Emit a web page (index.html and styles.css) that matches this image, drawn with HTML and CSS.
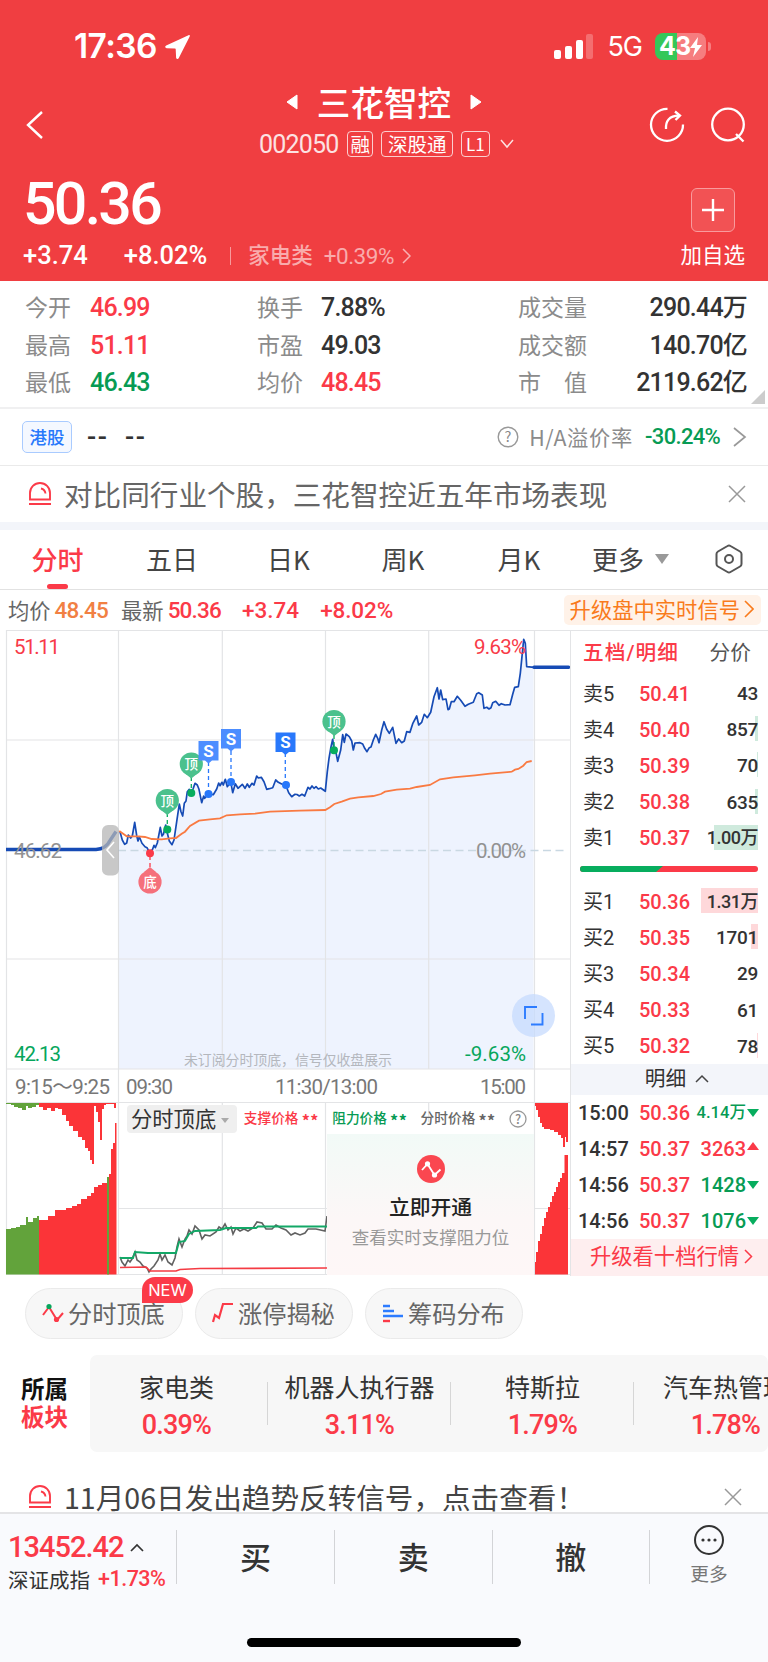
FILE: index.html
```html
<!DOCTYPE html>
<html lang="zh-CN">
<head>
  <meta charset="UTF-8" />
  <meta name="viewport" content="width=device-width, initial-scale=1.0"/>
  <title>三花智控 002050</title>
  <link rel="stylesheet" href="styles.css">
</head>
<body>

  <header class="top">
    <div class="status">
      <span class="clock">17:36</span>
      <svg class="location" width="27" height="26" viewBox="0 0 27 26"><path d="M24.5 1.2 2.2 11.6c-1.6.8-1.2 2.6.5 2.7l8.3.3c.5 0 .7.2.7.7l.4 8.1c.1 1.7 2 2.1 2.7.5L25.7 2.4c.4-1-.3-1.6-1.2-1.2z" fill="#fff"/></svg>
      <svg class="signal" width="40" height="26" viewBox="0 0 40 26">
        <rect x="0" y="16" width="7" height="9" rx="2" fill="#fff"/>
        <rect x="11" y="12" width="7" height="13" rx="2" fill="#fff"/>
        <rect x="22" y="6" width="7" height="19" rx="2" fill="#fff"/>
        <rect x="32" y="0" width="7" height="25" rx="2" fill="#fff" opacity=".25"/>
      </svg>
      <span class="network">5G</span>
      <span class="battery">43<svg width="12" height="20" viewBox="0 0 12 20"><path d="M8 0 0 11h5l-2 9 9-12H7z" fill="#fff"/></svg></span>
      <i class="battery-cap"></i>
    </div>

    <div class="title-bar">
      <svg class="back" width="18" height="30" viewBox="0 0 18 30"><path d="M16 2 2 15l14 13" fill="none" stroke="#fff" stroke-width="2.4"/></svg>
      <div class="title">
        <div class="name-row">
          <svg width="12" height="16" viewBox="0 0 12 16"><path d="M11 1v14L1 8z" fill="#fff" stroke="#fff" stroke-linejoin="round"/></svg>
          <h1>三花智控</h1>
          <svg width="12" height="16" viewBox="0 0 12 16"><path d="M1 1v14L11 8z" fill="#fff" stroke="#fff" stroke-linejoin="round"/></svg>
        </div>
        <div class="code-row">
          <span class="num code">002050</span>
          <span class="tag">融</span>
          <span class="tag wide">深股通</span>
          <span class="tag l1">L1</span>
          <svg width="14" height="10" viewBox="0 0 14 10"><path d="m1 1 6 7 6-7" fill="none" stroke="#fff" stroke-width="1.5" opacity=".85"/></svg>
        </div>
      </div>
      <div class="title-icons">
        <svg width="36" height="36" viewBox="0 0 36 36" fill="none" stroke="#fff" stroke-width="2.3">
          <path d="M18.5 1.8A16 16 0 1 0 34 17.5"/>
          <path d="M17 22c-.5-8 3-13 13-13.5"/>
          <path d="m26 4.500 5 4-4.500 4.500"/>
        </svg>
        <svg width="36" height="36" viewBox="0 0 36 36" fill="none" stroke="#fff" stroke-width="2.3">
          <circle cx="18" cy="17.5" r="15.8"/>
          <path d="m26 27 7.500 7.500"/>
        </svg>
      </div>
    </div>

    <div class="quote">
      <div>
        <div class="num price">50.36</div>
        <div class="change num">
          <b>+3.74</b><b class="pct">+8.02%</b><i></i>
          <span class="industry">家电类</span><span class="industry-pct">+0.39%</span>
          <svg width="9" height="16" viewBox="0 0 9 16"><path d="m1 1 7 7-7 7" fill="none" stroke="#fff" stroke-width="1.5" opacity=".6"/></svg>
        </div>
      </div>
      <div class="watch">
        <span class="plus"><svg width="22" height="22" viewBox="0 0 22 22"><path d="M11 0v22M0 11h22" stroke="#fff" stroke-width="2.4"/></svg></span>
        <span>加自选</span>
      </div>
    </div>
  </header>

  <section class="stats">
    <span>今开</span><b class="num up">46.99</b><span>换手</span><b class="num">7.88%</b><span>成交量</span><b class="num">290.44万</b>
    <span>最高</span><b class="num up">51.11</b><span>市盈</span><b class="num">49.03</b><span>成交额</span><b class="num">140.70亿</b>
    <span>最低</span><b class="num down">46.43</b><span>均价</span><b class="num up">48.45</b><span>市　值</span><b class="num">2119.62亿</b>
    <i class="corner"></i>
  </section>

  <section class="ha">
    <span class="hk">港股</span>
    <span class="dash">--</span><span class="dash">--</span>
    <svg class="help" width="22" height="22" viewBox="0 0 22 22"><circle cx="11" cy="11" r="9.8" fill="none" stroke="#999" stroke-width="1.4"/><text x="11" y="16" font-size="14.5" text-anchor="middle" fill="#888">?</text></svg>
    <span class="ha-label">H/A溢价率</span>
    <b class="num down">-30.24%</b>
    <svg width="14" height="20" viewBox="0 0 14 20"><path d="m1 1 11 9-11 9" fill="none" stroke="#999" stroke-width="1.7"/></svg>
  </section>

  <section class="notice">
    <svg class="bell" width="22" height="24" viewBox="0 0 22 24" fill="none" stroke="#fb3a48" stroke-width="1.9"><path d="M1 17.500V11a10 10 0 0 1 20 0v6.500zM0 22h22M12 6.500q4 1 4.500 5"/></svg>
    <span>对比同行业个股，三花智控近五年市场表现</span>
    <svg class="close" width="18" height="18" viewBox="0 0 18 18"><path d="m1 1 16 16M17 1 1 17" stroke="#999" stroke-width="1.5"/></svg>
  </section>

  <nav class="tabs">
    <span class="active">分时</span>
    <span>五日</span>
    <span>日K</span>
    <span>周K</span>
    <span>月K</span>
    <span class="more">更多<svg width="14" height="10" viewBox="0 0 14 10"><path d="M0 0h14L7 10z" fill="#999"/></svg></span>
    <svg class="gear" width="28" height="30" viewBox="0 0 28 30" fill="none" stroke="#555" stroke-width="2"><path d="M12.500 2q1.500-1 3 0l9.500 5.500q1.500.9 1.500 2.500v10q0 1.600-1.500 2.500L15.500 28q-1.500 1-3 0L3 22.500Q1.500 21.600 1.500 20V10Q1.500 8.400 3 7.500z"/><circle cx="14" cy="15" r="4"/></svg>
  </nav>

  <div class="info">
    <span>均价</span><b class="num avg">48.45</b>
    <span>最新</span><b class="num up">50.36</b>
    <b class="num up diff">+3.74</b><b class="num up diff-pct">+8.02%</b>
    <span class="upgrade">升级盘中实时信号<svg width="10" height="18" viewBox="0 0 10 18"><path d="m1 1 8 8-8 8" fill="none" stroke="#f97b1c" stroke-width="1.6"/></svg></span>
  </div>

  <main class="market">
    <div class="charts">
      <!-- price chart -->
      <svg class="price-chart" width="570" height="472" viewBox="0 630 570 472">
        <path fill="#eef3fe" d="M119 1069V831L122 840 125 844 128 835 131 838 135 822 138 841 139 837 142 843 145 847 150 853 155 848 160 827 162 836 166 825 169 841 172 845 174 840 177 822 179 804 183 816 186 801 189 789 195 783 199 789 202 803 208 794 213 795 219 783 225 779 231 782 233 793 235 784 245 788 252 783 257 776 261 777 267 789 273 788 276 780 286 785 292 797 305 796 308 787 320 788 325 791 329 758 333 739 338 761 343 735 349 737 353 750 355 743 363 744 367 752 376 734 379 743 384 722 389 733 393 727 396 743 404 741 407 732 417 716 419 725 431 712 434 697 437 688 443 700 448 710 457 696 465 706 473 702 477 694 482 695 484 708 496 701 510 705 515 687 518 687 524 639 527 667H533.500V1069z"/>
        <path class="grid" d="M6.500 630.500h563.500M6.500 740h563.500M6.500 959h563.500M6.500 1069h563.500M6.500 630v472M118.500 630v472M222.300 630v439M325.500 630v439M428.700 630v439M534.500 630v472"/>
        <path d="M118 850.500h449" stroke="#c9d8e2" stroke-width="1.5" stroke-dasharray="8 4.500"/>

        <path d="M6 849.500h90q10-.5 14-9l6-9" fill="none" stroke="#164bb5" stroke-width="3.4"/>
        <rect x="102" y="825" width="17" height="50.5" rx="6" fill="#b5b5b5" opacity=".75"/>
        <path d="m114 842-7 8 7 8" fill="none" stroke="#fff" stroke-width="1.6"/>

        <polyline class="price-line" points="120,831.7 122.3,840 124.7,844.3 126.7,843 128.3,835 130.7,838 132.3,836 134.7,822.3 136.7,835.7 138,841 139.3,836.7 142,843.3 145,846.7 147,847.7 150,853.3 152.7,849 154,845.3 155.3,847.7 157.3,843 160.3,827.3 162,836 163.5,834 165.7,825 167.3,833 169.3,841 172,844.7 174,840 176.7,821.7 179.3,804 181,811.7 182.7,816 184.3,803.3 186,801 187.3,791.7 189.3,789.3 191.3,793.3 193.3,788.3 195,783.3 197.3,785 199,789.3 201.7,802.7 203.7,796 204.7,798.3 208.3,794 213.3,794.7 216.7,789 218.7,783 220,785.7 222,782.3 223.3,785 225.3,779.3 227.3,786.7 230.7,781.7 232.7,792.7 235.3,783.7 238,788.3 242.3,784.3 245,788.3 247.3,784 249.3,787.3 252,783.3 254,785 256.7,776 258.3,778 261.3,777.3 264,781.7 266.7,789.3 269.3,788.7 272.7,787.7 275.7,780 278.3,782.3 281.7,784 285.7,785 288.7,792.7 291.7,796.7 295,794.3 297,794.5 299.3,796 302,794.3 304.7,796 308,787.3 310,789 312,786 314,788.3 316,786.7 318.3,789 320.7,788 325.3,791.3 327.3,771.7 329,758.3 330.7,748.3 332.7,739.3 334.3,750 336,752.7 337.7,761.3 340.7,750 342.7,734.7 344.3,742.3 346,734 349.3,736.7 351.7,741 353.3,750 355,743 360,742.7 362.7,744 364.7,748.3 367,751.7 369.3,747.7 371,747 373.3,740 375.7,734.3 377.7,738.3 379,742.7 381.7,730 384,721.7 386.7,729.3 389.3,733.3 392.7,727.3 396,743.3 398.7,739 401.7,742.7 404.3,741 406.7,731.7 410,732.3 412.7,723.7 416.7,716 418.7,725 421.7,722.3 424.3,714.3 427.3,717.7 430.7,712.3 434,696.7 437.3,687.7 439,699 440.7,690 442.7,699.7 446,699 448,709.7 449.3,709 451.3,701.7 454,701.7 457.3,696.3 460.7,700.3 465,706.3 468.3,704.3 473.3,702.3 476.7,693.7 478.7,692.7 482.3,695 484,708.3 486.7,707.3 489,709 491,707.7 492.7,702.7 495.7,701.3 499,705.3 501.3,703.7 505,705 510,704.7 512.7,694.3 514.7,687.3 518.3,686.7 520.3,673.3 522.3,653.3 523.7,639.3 525.3,643.3 526.7,666.7 534.3,667.3"/>
        <path d="M534 667.300h34.500" stroke="#164bb5" stroke-width="3.4" stroke-linecap="round"/>
        <polyline class="avg-line" points="119.3,831 126.7,836.3 138.3,836.3 145,837 151.7,839 161.7,839.3 170,838.3 176,838 181.7,833.7 185,831.7 190,826 199,820.7 210,819.3 220,818.3 226.7,815.3 240,814.3 255,813.7 270,811.7 300,810.7 325.3,810 330,807.3 334.3,804 341.7,801.7 350,798.7 358.3,797.3 373.3,796 381,794 385,791.7 396.7,789.7 410,788.7 416.7,787 430,785 440,779.3 453.3,777.3 475,775.3 490,773.7 511.7,771.7 515,769.7 518.3,769 523.3,765.7 526.7,762 531.7,761"/>

        <!-- top / bottom signals -->
        <g class="mark green">
          <path d="M167.300 813v14M191.300 777v14M334 735v14"/>
          <circle cx="167.3" cy="829.5" r="4"/><circle cx="191.3" cy="793" r="4"/><circle cx="334" cy="750.3" r="4"/>
        </g>
        <g fill="#4bc18d">
          <path d="M161 810h12.500l-6.200 5zM185 773.500h12.500l-6.200 5zM328 731h12.500l-6.200 5z"/>
          <circle cx="167.3" cy="800.5" r="11.6"/><circle cx="191.3" cy="764" r="11.6"/><circle cx="334" cy="721.5" r="11.6"/>
        </g>
        <g class="mark red"><path d="M150 856v14"/><circle cx="150" cy="853.3" r="4"/></g>
        <path d="M144 872h12l-6-5z" fill="#f5707b"/><circle cx="150" cy="882" r="11.6" fill="#f5707b"/>
        <g class="mark-text">
          <text x="167.3" y="805.5">顶</text><text x="191.3" y="769">顶</text><text x="334" y="726.5">顶</text><text x="150" y="887">底</text>
        </g>
        <g class="mark blue">
          <path d="M208.500 762v30M231 751v28M285.300 753v29"/>
          <circle cx="208.5" cy="794" r="4"/><circle cx="231" cy="782" r="4"/><circle cx="286" cy="785" r="4"/>
        </g>
        <path d="M198.500 741h20v19.500h-6.500l-3.500 3-3.500-3h-6.500zM221 729h20v19.500h-6.500l-3.500 3-3.500-3h-6.500z" fill="#4c8dff"/>
        <path d="M275.500 732.500h20v19.500h-6.500l-3.500 3-3.500-3h-6.500z" fill="#2878fb"/>
        <g class="s-text"><text x="208.5" y="756.5">S</text><text x="231" y="744.5">S</text><text x="285.5" y="748">S</text></g>

        <g class="axis">
          <text x="14" y="653.5" textLength="46" fill="#f83a48">51.11</text>
          <text x="474" y="653.5" textLength="52" fill="#f83a48">9.63%</text>
          <text x="14" y="857.5" textLength="48" fill="#929292">46.62</text>
          <text x="476" y="857.5" textLength="50" fill="#929292">0.00%</text>
          <text x="14" y="1061" textLength="47" fill="#07a65c">42.13</text>
          <text x="465" y="1061" textLength="61" fill="#07a65c">-9.63%</text>
          <g fill="#777">
            <text x="15" y="1093.5" textLength="95">9:15～9:25</text>
            <text x="126" y="1093.5" textLength="47">09:30</text>
            <text x="275" y="1093.5" textLength="103">11:30/13:00</text>
            <text x="480" y="1093.5" textLength="46">15:00</text>
          </g>
        </g>
        <text x="184" y="1065" font-size="13.9" fill="#b4b7bd" textLength="208">未订阅分时顶底，信号仅收盘展示</text>

        <circle cx="533.5" cy="1015.5" r="21.5" fill="#c5dafd" opacity=".72"/>
        <path d="M525 1019v-12h12M531 1024.500h11.500v-11.500" fill="none" stroke="#2d7cff" stroke-width="1.9"/>
      </svg>

      <div class="mini">
        <svg width="570" height="173" viewBox="0 1102 570 173">
          <path class="grid" d="M6 1102.500h564M118 1208.500h209M534 1208.500h36M6 1274.500h564M6.500 1102v173M118.500 1102v173M222.300 1102v173M325.500 1102v173M428.700 1102v20M534.500 1102v173"/>
          <!-- call auction volume -->
          <path fill="#62a33b" d="M6 1103H39V1105H36V1107H32V1108H28V1106H26V1110H22V1108H18V1107H14V1105H11V1104H6zM6 1274.500V1229H11V1228H16V1227H20V1225H26V1217H28V1222H33V1218H37V1216H39V1274.500z"/>
          <path fill="#fb3438" d="M39 1103H116V1108H114V1104H106V1105H104V1109H102V1140H100V1122H98V1112H96V1106H94V1164H92V1160H90V1151H88V1148H85V1140H82V1137H78V1131H73V1126H69V1121H66V1115H62V1109H58V1108H55V1111H51V1108H47V1110H43V1107H39zM39 1274.500V1220H48V1216H55V1210H66V1208H72V1206H77V1204H81V1199H87V1196H91V1193H94V1187H98V1185H102V1183H108V1177H109V1174H111V1149H113V1143H115V1123H116.500V1274.500z"/>
          <path d="M108 1177v97.500" stroke="#62a33b" stroke-width="2"/>
          <path fill="#fb3438" d="M535 1103H568V1142H566V1137H565V1147H563V1138H561V1135H558V1132H554V1130H550V1129H544V1127H542V1123H540V1117H538V1110H536V1106H535zM535 1274.500V1262H536V1252H538V1241H540V1234H542V1226H544V1218H546V1212H548V1207H550V1202H552V1196H554V1192H556V1187H558V1182H560V1178H562V1173H564.500V1155H568V1274.500z"/>
          <!-- support / resistance -->
          <polyline fill="none" stroke="#616161" stroke-width="1.6" points="120,1257 122,1262 125,1266 128,1260 130,1262 132,1259 135,1252 137,1260 140,1262 143,1266 147,1268 149,1272 151,1269 154,1266 158,1260 160,1254 162,1260 165,1255 168,1262 172,1265 175,1258 177,1247 179,1239 182,1247 185,1239 187,1236 189,1230 192,1234 195,1226 199,1230 202,1239 205,1235 210,1236 216,1232 219,1227 222,1229 225,1224 228,1230 231,1227 233,1234 236,1228 240,1231 244,1229 248,1231 253,1228 257,1222 262,1223 266,1229 272,1229 276,1225 281,1228 286,1230 291,1235 295,1233 300,1235 305,1233 308,1229 316,1229 325,1231 327,1216"/>
          <polyline fill="none" stroke="#13a867" stroke-width="1.9" points="120,1258 133,1258 135,1252 148,1253 176,1253 179,1242 185,1241 189,1234 195,1231 220,1230 226,1228 256,1228 258,1226.5 327,1226.5"/>
          <polyline fill="none" stroke="#f43b43" stroke-width="1.7" points="120,1267.5 146,1267 150,1271 176,1271 180,1269.5 200,1268.5 327,1268"/>
        </svg>
        <div class="legend">
          <span class="pick">分时顶底<i></i></span>
          <span class="up">支撑价格 <b>**</b></span>
          <span class="down">阻力价格 <b>**</b></span>
          <span>分时价格 <b>**</b></span>
          <svg width="18" height="18" viewBox="0 0 18 18"><circle cx="9" cy="9" r="8" fill="none" stroke="#999" stroke-width="1.3"/><text x="9" y="13.5" font-size="12.5" text-anchor="middle" fill="#888">?</text></svg>
        </div>
        <div class="promo">
          <svg width="28" height="28" viewBox="0 0 28 28"><circle cx="14" cy="14" r="14" fill="#fa4750"/><path d="m5 15 5.500-6 7 11 6-5.500" fill="none" stroke="#fff" stroke-width="1.8"/><circle cx="10.5" cy="8.8" r="2.6" fill="#fff"/><circle cx="17.5" cy="20" r="2.6" fill="#fff"/></svg>
          <b>立即开通</b>
          <span>查看实时支撑阻力位</span>
        </div>
      </div>
    </div>

    <aside class="book">
      <div class="book-head"><b>五档/明细</b><span>分价</span></div>
      <div class="level"><span>卖5</span><b>50.41</b><em>43</em></div>
      <div class="level sell"><span>卖4</span><b>50.40</b><em>857</em><i style="width: 3px"></i></div>
      <div class="level sell"><span>卖3</span><b>50.39</b><em>70</em><i style="width: 1px"></i></div>
      <div class="level sell"><span>卖2</span><b>50.38</b><em>635</em><i style="width: 3px"></i></div>
      <div class="level sell"><span>卖1</span><b>50.37</b><em class="wan">1.00万</em><i style="width: 44px"></i></div>
      <div class="ratio"><svg width="178" height="6" viewBox="0 0 178 6"><rect width="178" height="6" rx="3" fill="#fb3a48"/><path d="M3 0h80l-7 6H3a3 3 0 0 1 0-6z" fill="#07ad5e"/></svg></div>
      <div class="level buy"><span>买1</span><b>50.36</b><em class="wan">1.31万</em><i style="width: 57px"></i></div>
      <div class="level buy"><span>买2</span><b>50.35</b><em>1701</em><i style="width: 7px"></i></div>
      <div class="level"><span>买3</span><b>50.34</b><em>29</em></div>
      <div class="level"><span>买4</span><b>50.33</b><em>61</em></div>
      <div class="level buy"><span>买5</span><b>50.32</b><em>78</em><i style="width: 1px"></i></div>
      <div class="detail-head">明细<svg width="14" height="9" viewBox="0 0 14 9"><path d="m1 8 6-6 6 6" fill="none" stroke="#444" stroke-width="1.5"/></svg></div>
      <div class="tick"><span>15:00</span><b>50.36</b><em class="down small">4.14万</em><i class="tri-down"></i></div>
      <div class="tick"><span>14:57</span><b>50.37</b><em class="up">3263</em><i class="tri-up"></i></div>
      <div class="tick"><span>14:56</span><b>50.37</b><em class="down">1428</em><i class="tri-down"></i></div>
      <div class="tick"><span>14:56</span><b>50.37</b><em class="down">1076</em><i class="tri-down"></i></div>
      <div class="ten">升级看十档行情<svg width="9" height="15" viewBox="0 0 9 15"><path d="m1 1 6.500 6.500L1 14" fill="none" stroke="#fb3a48" stroke-width="1.5"/></svg></div>
    </aside>
  </main>

  <div class="pills">
    <span class="pill">
      <svg width="22" height="26" viewBox="0 0 22 26"><path d="m1 14 6-8 8 13 6-7" fill="none" stroke="#fb3a48" stroke-width="2"/><circle cx="7" cy="5.5" r="2.6" fill="#07a65c"/><circle cx="14.5" cy="18.5" r="2.6" fill="#fb3a48"/></svg>
      分时顶底<em>NEW</em>
    </span>
    <span class="pill">
      <svg width="22" height="26" viewBox="0 0 22 26"><path d="M1 21 3 14l4 3 4-14h10" fill="none" stroke="#fb3a48" stroke-width="2.2"/></svg>
      涨停揭秘
    </span>
    <span class="pill">
      <svg width="22" height="26" viewBox="0 0 22 26" stroke-width="2.4"><path d="M1 5h7M1 10h11M1 15h20" stroke="#2d7cff"/><path d="M1 20h7" stroke="#fb3a48"/></svg>
      筹码分布
    </span>
  </div>

  <section class="sectors">
    <div class="sector-title">所属<br><span>板块</span></div>
    <div class="sector-list">
      <div class="sector"><span>家电类</span><b class="num">0.39%</b></div>
      <div class="sector"><span>机器人执行器</span><b class="num">3.11%</b></div>
      <div class="sector"><span>特斯拉</span><b class="num">1.79%</b></div>
      <div class="sector"><span>汽车热管理</span><b class="num">1.78%</b></div>
    </div>
  </section>

  <section class="notice signal-notice">
    <svg class="bell" width="22" height="24" viewBox="0 0 22 24" fill="none" stroke="#fb3a48" stroke-width="1.9"><path d="M1 17.500V11a10 10 0 0 1 20 0v6.500zM0 22h22M12 6.500q4 1 4.500 5"/></svg>
    <span>11月06日发出趋势反转信号，点击查看！</span>
    <svg class="close" width="18" height="18" viewBox="0 0 18 18"><path d="m1 1 16 16M17 1 1 17" stroke="#999" stroke-width="1.5"/></svg>
  </section>

  <footer class="bottom">
    <div class="actions">
      <div class="index">
        <div class="index-value"><b class="num">13452.42</b><svg width="14" height="9" viewBox="0 0 14 9"><path d="m1 8 6-6 6 6" fill="none" stroke="#333" stroke-width="1.7"/></svg></div>
        <div class="index-name">深证成指 <b class="num">+1.73%</b></div>
      </div>
      <div class="action">买</div>
      <div class="action">卖</div>
      <div class="action">撤</div>
      <div class="more-action">
        <svg width="32" height="32" viewBox="0 0 32 32"><circle cx="16" cy="16" r="14" fill="none" stroke="#333" stroke-width="2"/><g fill="#333"><circle cx="10" cy="16" r="1.6"/><circle cx="16" cy="16" r="1.6"/><circle cx="22" cy="16" r="1.6"/></g></svg>
        <span>更多</span>
      </div>
    </div>
    <div class="home-bar"></div>
  </footer>

</body>
</html>
```

FILE: styles.css
```css
* {
  box-sizing: border-box;
}

body {
  margin: 0;
  width: 768px;
  height: 1662px;
  overflow: hidden;
  background: #fff;
  color: #333;
  font-family: "Noto Sans CJK SC", sans-serif;
  font-size: 22px;
  line-height: 1;
}

svg {
  display: block;
  flex: none;
}

i, em {
  font-style: normal;
}

span, b {
  white-space: nowrap;
}

.num {
  font-family: Roboto, "Noto Sans CJK SC", sans-serif;
  font-weight: 500;
  letter-spacing: -0.8px;
}

.num b {
  font-weight: 500;
}

.up {
  color: #fb3a48 !important;
}

.down {
  color: #079b54 !important;
}

/* header */
.top {
  height: 281px;
  padding-top: 28px;
  background: #f03e41;
  color: #fff;
}

.status {
  display: flex;
  align-items: center;
  height: 37px;
  padding: 0 57px 0 74px;
}

.clock {
  width: 84px;
  font: 600 33.5px/37px Inter, sans-serif;
  letter-spacing: -.6px;
}

.location {
  margin-left: 6px;
}

.signal {
  margin-left: auto;
}

.network {
  margin: 0 13px 0 13px;
  font: 400 27px/37px Inter, sans-serif;
  letter-spacing: -1px;
}

.battery {
  display: flex;
  align-items: center;
  justify-content: center;
  width: 51px;
  height: 27px;
  border-radius: 8px;
  background: linear-gradient(90deg, #34c759 43%, #f67d7f 43%);
  font: 700 25px/27px Inter, sans-serif;
  letter-spacing: -1px;
}

.battery-cap {
  width: 3px;
  height: 9px;
  margin-left: 2px;
  border-radius: 0 3px 3px 0;
  background: #f67d7f;
}

.title-bar {
  display: grid;
  grid-template-columns: 131px 454px 1fr;
  height: 100px;
  padding: 0 0 0 26px;
}

.back {
  margin-top: 45px;
}

.title {
  padding-top: 16px;
}

.name-row,
.code-row {
  display: flex;
  align-items: center;
  justify-content: center;
}

.name-row {
  height: 42px;
  gap: 19px;
}

h1 {
  margin: 0;
  font-size: 33.6px;
  font-weight: 500;
}

.code-row {
  height: 42px;
  gap: 7.5px;
  padding-left: 5px;
}

.code {
  margin-right: 1px;
  font-size: 25px;
  font-weight: 400;
  opacity: .85;
}

.tag {
  height: 26px;
  padding: 0 2.5px;
  border: 1px solid rgba(255, 255, 255, .75);
  border-radius: 4px;
  font-size: 19.5px;
  line-height: 23px;
}

.tag.wide {
  padding: 0 6px;
}

.tag.l1 {
  padding: 0 4px;
  font-size: 17px;
}

.code-row svg {
  margin-left: 3px;
}

.title-icons {
  display: flex;
  gap: 25px;
  margin-left: 38px;
  padding-top: 42px;
}

.quote {
  display: flex;
  justify-content: space-between;
  padding: 9px 23px 0 23px;
}

.price {
  height: 60px;
  font-size: 59px;
  line-height: 60px;
  letter-spacing: -2.7px;
}

.change {
  display: flex;
  align-items: center;
  height: 30px;
  margin-top: 7px;
  font-size: 25.5px;
  letter-spacing: 0;
}

.change .pct {
  margin-left: 36px;
}

.change i {
  width: 1px;
  height: 18px;
  margin: 0 17px 0 23px;
  background: #f89a9c;
}

.industry {
  color: #f9abac;
  font-size: 21.5px;
}

.industry-pct {
  margin: 0 8px 0 11px;
  color: #f9abac;
  font-size: 22.5px;
  font-weight: 400;
  letter-spacing: -.5px;
}

.watch {
  display: flex;
  flex-direction: column;
  align-items: center;
  gap: 11px;
  padding-top: 14px;
  font-size: 21.5px;
}

.plus {
  display: grid;
  place-items: center;
  width: 44px;
  height: 44px;
  border: 1px solid #f99b9d;
  border-radius: 6px;
  background: #f25254;
}

/* key figures */
.stats {
  position: relative;
  display: grid;
  grid-template-columns: 65px 167px 64px 197px 80px 1fr;
  grid-template-rows: repeat(3, 37.5px);
  align-items: center;
  height: 128px;
  padding: 7px 21px 0 25px;
  border-bottom: 2px solid #f0f0f1;
}

.stats span {
  color: #8b8b8b;
  font-size: 23px;
}

.stats b {
  padding-top: 2px;
  font-size: 25px;
}

.stats b:nth-of-type(3n) {
  text-align: right;
}

.corner {
  position: absolute;
  right: 3px;
  bottom: 3px;
  border: 7px solid transparent;
  border-right-color: #ccc;
  border-bottom-color: #ccc;
}

.ha {
  display: flex;
  align-items: center;
  height: 57px;
  padding: 0 21px 0 22px;
  border-bottom: 1px solid #eaeaea;
}

.hk {
  width: 50px;
  height: 32px;
  margin-right: 15px;
  border: 1px solid #a9cbff;
  border-radius: 5px;
  background: #f4f8ff;
  color: #2878fb;
  font-size: 17.5px;
  font-weight: 500;
  line-height: 29px;
  text-align: center;
}

.dash {
  width: 38px;
  font: 500 27px/30px Roboto, sans-serif;
  letter-spacing: 1.5px;
}

.help {
  margin-left: auto;
}

.ha-label {
  margin: 0 12px 0 10px;
  color: #8b8b8b;
  font-size: 21.3px;
  letter-spacing: .7px;
}

.ha b {
  margin-right: 13px;
  font-size: 22px;
  letter-spacing: -.7px;
}

.notice {
  display: flex;
  align-items: center;
  height: 56px;
  padding: 0 22px 0 29px;
  color: #666;
  font-size: 28.6px;
}

.bell {
  margin-right: 13px;
}

.close {
  margin-left: auto;
}

/* period tabs */
.tabs {
  display: grid;
  grid-template-columns: 115px 114px 119px 110px 122px 110px 1fr;
  align-items: center;
  height: 68px;
  padding-bottom: 1px;
  border-top: 8px solid #f3f5fa;
  border-bottom: 1px solid #e2e2e2;
  color: #444;
  font-size: 26px;
  text-align: center;
}

.tabs .active {
  position: relative;
  color: #fb3a48;
  font-weight: 500;
}

.tabs .active::after {
  content: "";
  position: absolute;
  left: 47px;
  bottom: -17px;
  width: 21px;
  height: 5px;
  border-radius: 3px;
  background: #fb3a48;
}

.tabs .more {
  display: flex;
  align-items: center;
  gap: 11px;
  padding-left: 12px;
}

.gear {
  margin-left: 25px;
}

.info {
  display: flex;
  align-items: center;
  height: 40px;
  padding: 0 7px 0 8px;
  color: #666;
  font-size: 21.3px;
}

.info b {
  margin: 0 13px 0 4px;
  font-size: 22.5px;
}

.info .avg {
  color: #f18043;
}

.info .diff {
  margin: 0 17px 0 8px;
  letter-spacing: 0;
}

.info .diff-pct {
  letter-spacing: -.1px;
}

.upgrade {
  display: flex;
  align-items: center;
  gap: 4px;
  height: 30px;
  margin-left: auto;
  padding: 0 7px 2px 6px;
  border-radius: 5px;
  background: #fff2e8;
  color: #f97b1c;
}

/* charts */
.market {
  display: grid;
  grid-template-columns: 570px 198px;
  height: 645px;
}

.grid {
  fill: none;
  stroke: #e3e4e6;
  stroke-width: 1.2;
}

.price-line {
  fill: none;
  stroke: #164bb5;
  stroke-width: 1.7;
  stroke-linejoin: round;
}

.avg-line {
  fill: none;
  stroke: #f97a42;
  stroke-width: 1.8;
}

.mark {
  stroke-width: 1.3;
}

.mark path {
  stroke-dasharray: 4 3;
}

.mark circle {
  stroke: none;
}

.green {
  fill: #07ad5e;
  stroke: #07ad5e;
}

.red {
  fill: #fb3a48;
  stroke: #fb3a48;
}

.blue {
  fill: #2878fb;
  stroke: #2878fb;
}

.mark-text {
  fill: #fff;
  font-size: 13.5px;
  font-weight: 500;
  text-anchor: middle;
}

.s-text {
  fill: #fff;
  font: 700 17px Roboto, sans-serif;
  text-anchor: middle;
}

.axis {
  font: 400 20.5px Roboto, "Noto Sans CJK SC", sans-serif;
}

.mini {
  position: relative;
  height: 173px;
}

.legend {
  position: absolute;
  left: 127px;
  top: 3px;
  display: flex;
  align-items: center;
  width: 400px;
  height: 28px;
  color: #666;
  font-size: 13.7px;
  font-weight: 500;
}

.legend span {
  width: 89.5px;
}

.legend b {
  font-size: 16px;
  letter-spacing: .5px;
  vertical-align: -4px;
}

.legend .pick {
  display: flex;
  align-items: center;
  justify-content: space-between;
  width: 111px;
  height: 28px;
  margin-right: 7px;
  padding: 0 8px 3px 4px;
  border-radius: 4px;
  background: #efefef;
  color: #333;
  font-size: 21.3px;
  font-weight: 400;
}

.pick i {
  margin-top: 5px;
  border: 4.5px solid transparent;
  border-top: 5px solid #aaa;
  border-bottom: 0;
}

.legend svg {
  margin-left: auto;
}

.promo {
  position: absolute;
  left: 327px;
  top: 32px;
  display: flex;
  flex-direction: column;
  align-items: center;
  width: 207px;
  height: 141px;
  padding-top: 21px;
  background: linear-gradient(#f2faf7, #fcf7f7 60%, #fef7f7);
}

.promo b {
  margin: 13px 0 11px;
  color: #222;
  font-size: 20.8px;
  font-weight: 500;
}

.promo span {
  color: #999;
  font-size: 17.5px;
}

/* order book */
.book {
  border-left: 1px solid #e3e4e6;
  border-top: 1px solid #e3e4e6;
  color: #333;
  font: 400 20px/1 Roboto, "Noto Sans CJK SC", sans-serif;
}

.book-head {
  display: flex;
  justify-content: space-between;
  height: 44px;
  padding: 12px 17px 0 12px;
  color: #555;
  font-size: 20.7px;
}

.book-head b {
  color: #fb3a48;
  font-weight: 500;
  letter-spacing: 1px;
}

.level,
.tick {
  position: relative;
  display: grid;
  grid-template-columns: 56px 50px 1fr;
  align-items: center;
  height: 36.2px;
  padding: 1px 10px 0 12px;
}

.level b,
.tick b {
  color: #fb3a48;
  font-weight: 500;
}

.level em {
  z-index: 1;
  font-size: 19px;
  font-weight: 500;
  letter-spacing: -.3px;
  text-align: right;
}

.level .wan {
  font-size: 18px;
  letter-spacing: -.5px;
}

.level i {
  position: absolute;
  right: 10px;
  top: 5px;
  height: 25px;
}

.sell i {
  background: #cfeadd;
}

.buy i {
  background: #fed8da;
}

.ratio {
  height: 27px;
  padding: 10px 0 0 9px;
}

.detail-head {
  display: flex;
  align-items: center;
  justify-content: center;
  gap: 9px;
  height: 31px;
  padding: 0 0 1px 15px;
  background: #f3f5fa;
  font-size: 20.7px;
}

.tick {
  grid-template-columns: 61px 52px 1fr 13px;
  height: 36px;
  padding: 0 9px 0 7px;
}

.tick span {
  font-weight: 500;
}

.tick em {
  text-align: right;
  font-weight: 500;
}

.tick .small {
  font-size: 16.6px;
}

.tri-down,
.tri-up {
  margin-left: 1px;
  border: 6.5px solid transparent;
}

.tri-down {
  border-top: 8px solid #07ad5e;
  border-bottom: 0;
}

.tri-up {
  border-bottom: 8px solid #fb3a48;
  border-top: 0;
  margin-bottom: 6px;
}

.ten {
  display: flex;
  align-items: center;
  justify-content: center;
  gap: 5px;
  height: 37px;
  padding: 0 0 1px 4px;
  background: #feeeef;
  color: #fb3a48;
  font-size: 21.3px;
}

/* tools */
.pills {
  display: flex;
  gap: 12.5px;
  padding: 13px 25px 0;
}

.pill {
  position: relative;
  display: flex;
  align-items: center;
  gap: 4px;
  width: 157.5px;
  height: 51px;
  padding: 0 0 0 16px;
  border: 1px solid #eaeaea;
  border-radius: 26px;
  background: #f7f7f7;
  color: #666;
  font-size: 24.2px;
}

.pill em {
  position: absolute;
  left: 116px;
  top: -12px;
  width: 51px;
  height: 26px;
  border-radius: 13px 13px 13px 0;
  background: #fb3a48;
  color: #fff;
  font: 400 16.5px/27px Inter, sans-serif;
  text-align: center;
}

.sectors {
  display: flex;
  align-items: center;
  height: 97px;
  margin-top: 16px;
}

.sector-title {
  flex: none;
  width: 90px;
  padding: 0 0 4px 21px;
  color: #111;
  font-size: 23.5px;
  font-weight: 700;
  line-height: 28px;
}

.sector-title span {
  color: #fb3a48;
}

.sector-list {
  display: flex;
  flex: none;
  width: 678px;
  height: 97px;
  overflow: hidden;
  border-radius: 7px;
  background: #f7f7f7;
}

.sector {
  position: relative;
  display: flex;
  flex: none;
  flex-direction: column;
  align-items: center;
  width: 183px;
  padding-top: 19px;
}

.sector:first-child {
  margin-left: -5px;
}

.sector:not(:last-child)::after {
  content: "";
  position: absolute;
  right: 0;
  top: 27px;
  width: 1.5px;
  height: 43px;
  background: #d6d6d6;
}

.sector span {
  font-size: 25px;
}

.sector b {
  margin-top: 13px;
  color: #fb3a48;
  font-size: 27px;
}

.signal-notice {
  height: 40px;
  margin-top: 25px;
  padding-right: 26px;
  color: #444;
}

/* bottom bar */
.bottom {
  position: absolute;
  left: 0;
  top: 1512px;
  width: 768px;
  height: 150px;
  border-top: 2px solid #e4e4e6;
  background: #f9fafd;
}

.actions {
  display: grid;
  grid-template-columns: 177px 158px 157.5px 157.5px 1fr;
  grid-template-rows: 54px;
  height: 54px;
  margin-top: 16px;
}

.index,
.action {
  border-right: 1.5px solid #d3d4d7;
}

.index {
  padding: 2px 0 0 8px;
}

.index-value {
  display: flex;
  align-items: center;
  gap: 7px;
  height: 30px;
}

.index b {
  color: #fb3a48;
}

.index-value b {
  font-size: 29px;
  letter-spacing: -1px;
}

.index-name {
  display: flex;
  align-items: center;
  gap: 8px;
  height: 34px;
  font-size: 20.5px;
}

.index-name b {
  font-size: 21.5px;
  letter-spacing: -.5px;
}

.action {
  font-size: 31px;
  font-weight: 500;
  line-height: 52px;
  text-align: center;
}

.more-action {
  display: flex;
  flex-direction: column;
  align-items: center;
  gap: 8px;
  margin: -6px 0 0;
  color: #777;
  font-size: 18.7px;
}

.home-bar {
  width: 274px;
  height: 9px;
  margin: 54px auto 0;
  border-radius: 5px;
  background: #000;
}
```
